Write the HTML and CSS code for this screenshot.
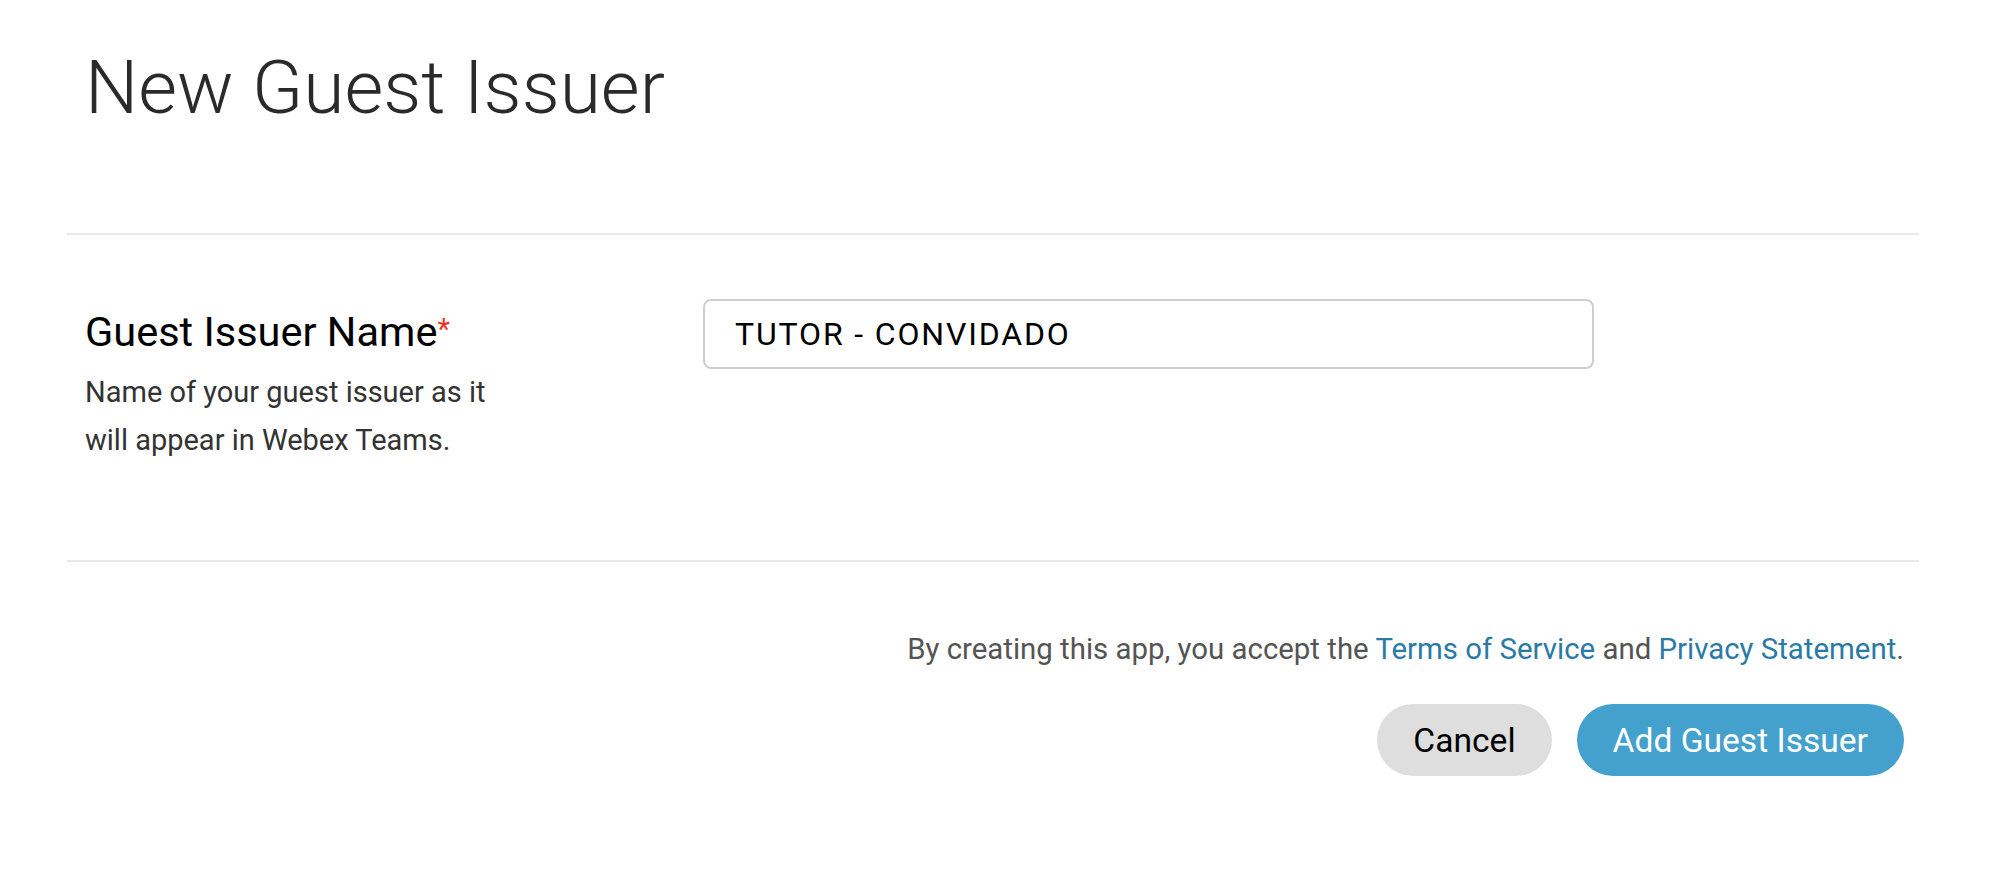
FILE: index.html
```html
<!DOCTYPE html>
<html lang="en">
<head>
  <meta charset="UTF-8">
  <title>New Guest Issuer</title>
  <link rel="stylesheet" href="styles.css">
</head>
<body>
  <div class="page">
    <h1 class="title">New Guest Issuer</h1>

    <div class="form-row">
      <div class="field-info">
        <div class="field-label">Guest Issuer Name<span class="required">*</span></div>
        <p class="field-help">Name of your guest issuer as it will appear in Webex Teams.</p>
      </div>
      <div class="field-input">
        <input type="text" class="text-input" value="TUTOR - CONVIDADO">
      </div>
    </div>

    <div class="footer">
      <p class="terms">By creating this app, you accept the <a href="#">Terms of Service</a> and <a href="#">Privacy Statement</a>.</p>
      <div class="actions">
        <button class="btn btn-cancel">Cancel</button>
        <button class="btn btn-primary">Add Guest Issuer</button>
      </div>
    </div>
  </div>
</body>
</html>
```

FILE: styles.css
```css
body {
  margin: 0;
  background-color: #fff;
  color: #121212;
  font-family: Roboto, 'Liberation Sans', sans-serif;
}
.page {
  padding: 0 75px 0 67px;
}
.title {
  margin: 0;
  padding: 43px 0 102px 18px;
  font-size: 75px;
  line-height: 88px;
  font-weight: 300;
  color: #2a2a2a;
}
.form-row {
  display: grid;
  grid-template-columns: 618px 891px;
  padding: 64px 0 96px 18px;
  border-top: 2px solid #e9e9e9;
  border-bottom: 2px solid #e9e9e9;
}
.field-info {
  padding-top: 6px;
}
.field-label {
  font-size: 41.5px;
  line-height: 48px;
  color: #000;
}
.required {
  color: #ea3323;
  font-size: 29px;
  vertical-align: 7px;
}
.field-help {
  margin: 12px 0 0;
  max-width: 430px;
  font-size: 29px;
  line-height: 48px;
  color: #333;
}
.text-input {
  box-sizing: border-box;
  width: 100%;
  height: 70px;
  padding: 0 30px;
  border: 2px solid #cfcfcf;
  border-radius: 8px;
  font-family: inherit;
  font-size: 32px;
  letter-spacing: 1.85px;
  color: #000;
  background: #fff;
}
.footer {
  display: flex;
  flex-direction: column;
  align-items: flex-end;
  padding: 63px 15px 0 0;
}
.terms {
  margin: 0;
  font-size: 29.4px;
  line-height: 48px;
  color: #545454;
}
.terms a {
  color: #2a7aa6;
  text-decoration: none;
}
.actions {
  display: flex;
  gap: 25px;
  margin-top: 31px;
}
.btn {
  height: 72px;
  padding: 0 36px;
  border: none;
  border-radius: 36px;
  font-family: inherit;
  font-size: 33.6px;
}
.btn-cancel {
  background-color: #dedede;
  color: #000;
}
.btn-primary {
  background-color: #44a0cd;
  color: #fff;
}
```
